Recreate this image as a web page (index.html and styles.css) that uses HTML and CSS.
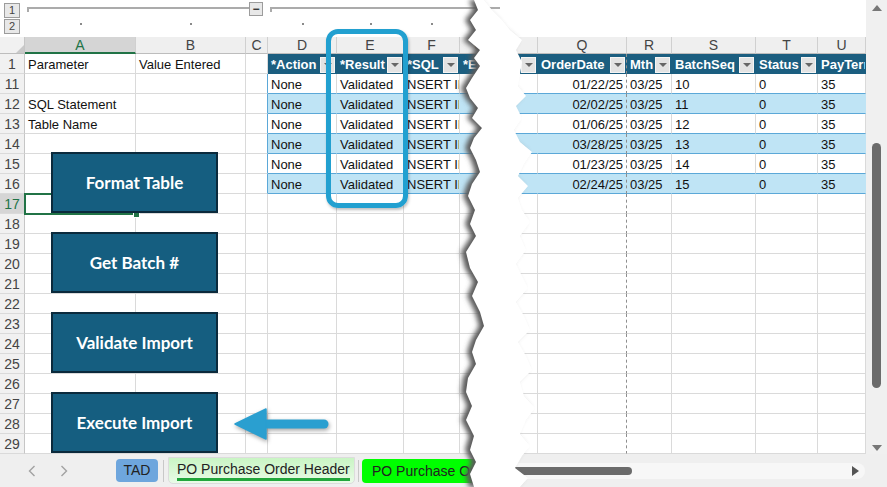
FILE: index.html
```html
<!DOCTYPE html>
<html>
<head>
  <title>PO Import</title>
  <link rel="stylesheet" href="styles.css">
</head>
<body>
<div class="app">
  <div class="top">
    <div class="sheet">
      <div class="band">
        <div class="levels"><span>1</span><span>2</span></div>
        <div class="bracket b1"><i class="ln"></i><span class="minus">&minus;</span></div>
        <div class="bracket b2"><i class="ln"></i></div>
        <i class="dot ca"></i><i class="dot cb"></i><i class="dot cd"></i><i class="dot ce"></i><i class="dot cf"></i>
      </div>

      <div class="row colhead">
        <div class="corner"></div><div class="on">A</div><div>B</div><div>C</div><div>D</div><div>E</div><div>F</div><div>G</div><div></div><div>Q</div><div>R</div><div>S</div><div>T</div><div>U</div>
      </div>
      <div class="row hdr">
        <div>1</div><div>Parameter</div><div>Value Entered</div><div></div>
        <div class="th">*Action<b class="dd"></b></div>
        <div class="th">*Result<b class="dd"></b></div>
        <div class="th">*SQL<b class="dd"></b></div>
        <div class="th">*ErrorMsg</div>
        <div class="th"><b class="dd"></b></div>
        <div class="th">OrderDate<b class="dd"></b></div>
        <div class="th">Mth<b class="dd"></b></div>
        <div class="th">BatchSeq<b class="dd"></b></div>
        <div class="th">Status<b class="dd"></b></div>
        <div class="th">PayTerms</div>
      </div>
      <div class="row t">
        <div>11</div><div></div><div></div><div></div><div>None</div><div>Validated</div><div>NSERT INTO</div><div></div><div></div><div class="r">01/22/25</div><div>03/25</div><div>10</div><div>0</div><div>35</div>
      </div>
      <div class="row t alt">
        <div>12</div><div>SQL Statement</div><div></div><div></div><div>None</div><div>Validated</div><div>NSERT INTO</div><div></div><div></div><div class="r">02/02/25</div><div>03/25</div><div>11</div><div>0</div><div>35</div>
      </div>
      <div class="row t">
        <div>13</div><div>Table Name</div><div></div><div></div><div>None</div><div>Validated</div><div>NSERT INTO</div><div></div><div></div><div class="r">01/06/25</div><div>03/25</div><div>12</div><div>0</div><div>35</div>
      </div>
      <div class="row t alt">
        <div>14</div><div></div><div></div><div></div><div>None</div><div>Validated</div><div>NSERT INTO</div><div></div><div></div><div class="r">03/28/25</div><div>03/25</div><div>13</div><div>0</div><div>35</div>
      </div>
      <div class="row t">
        <div>15</div><div></div><div></div><div></div><div>None</div><div>Validated</div><div>NSERT INTO</div><div></div><div></div><div class="r">01/23/25</div><div>03/25</div><div>14</div><div>0</div><div>35</div>
      </div>
      <div class="row t alt">
        <div>16</div><div></div><div></div><div></div><div>None</div><div>Validated</div><div>NSERT INTO</div><div></div><div></div><div class="r">02/24/25</div><div>03/25</div><div>15</div><div>0</div><div>35</div>
      </div>
      <div class="row cur"><div>17</div><div></div><div></div><div></div><div></div><div></div><div></div><div></div><div></div><div></div><div></div><div></div><div></div><div></div></div>
      <div class="row"><div>18</div><div></div><div></div><div></div><div></div><div></div><div></div><div></div><div></div><div></div><div></div><div></div><div></div><div></div></div>
      <div class="row"><div>19</div><div></div><div></div><div></div><div></div><div></div><div></div><div></div><div></div><div></div><div></div><div></div><div></div><div></div></div>
      <div class="row"><div>20</div><div></div><div></div><div></div><div></div><div></div><div></div><div></div><div></div><div></div><div></div><div></div><div></div><div></div></div>
      <div class="row"><div>21</div><div></div><div></div><div></div><div></div><div></div><div></div><div></div><div></div><div></div><div></div><div></div><div></div><div></div></div>
      <div class="row"><div>22</div><div></div><div></div><div></div><div></div><div></div><div></div><div></div><div></div><div></div><div></div><div></div><div></div><div></div></div>
      <div class="row"><div>23</div><div></div><div></div><div></div><div></div><div></div><div></div><div></div><div></div><div></div><div></div><div></div><div></div><div></div></div>
      <div class="row"><div>24</div><div></div><div></div><div></div><div></div><div></div><div></div><div></div><div></div><div></div><div></div><div></div><div></div><div></div></div>
      <div class="row"><div>25</div><div></div><div></div><div></div><div></div><div></div><div></div><div></div><div></div><div></div><div></div><div></div><div></div><div></div></div>
      <div class="row"><div>26</div><div></div><div></div><div></div><div></div><div></div><div></div><div></div><div></div><div></div><div></div><div></div><div></div><div></div></div>
      <div class="row"><div>27</div><div></div><div></div><div></div><div></div><div></div><div></div><div></div><div></div><div></div><div></div><div></div><div></div><div></div></div>
      <div class="row"><div>28</div><div></div><div></div><div></div><div></div><div></div><div></div><div></div><div></div><div></div><div></div><div></div><div></div><div></div></div>
      <div class="row"><div>29</div><div></div><div></div><div></div><div></div><div></div><div></div><div></div><div></div><div></div><div></div><div></div><div></div><div></div></div>

      <!-- floating shapes over the sheet -->
      <div class="hl"></div>
      <div class="sel"></div>
      <div class="shapes">
        <div class="btn">Format Table</div>
        <div class="btn">Get Batch #</div>
        <div class="btn">Validate Import</div>
        <div class="btn">Execute Import</div>
      </div>
      <svg class="arrow" width="110" height="46" viewBox="0 0 110 46">
        <line x1="34" y1="20" x2="94" y2="20" stroke="#2a9fd0" stroke-width="9" stroke-linecap="round"/>
        <polygon points="5,20 36,5 36,35" fill="#2a9fd0" stroke="#2a9fd0" stroke-width="1.5" stroke-linejoin="round"/>
      </svg>
    </div>

    <div class="vscroll">
      <i class="up"></i>
      <i class="vthumb"></i>
      <i class="down"></i>
    </div>
  </div>

  <div class="tabbar">
    <div class="nav">
      <svg width="8" height="12" viewBox="0 0 8 12"><polyline points="6.5,1 1.5,6 6.5,11" fill="none" stroke="#a2a2a2" stroke-width="1.4"/></svg>
      <svg width="8" height="12" viewBox="0 0 8 12"><polyline points="1.5,1 6.5,6 1.5,11" fill="none" stroke="#a2a2a2" stroke-width="1.4"/></svg>
    </div>
    <div class="tab tad">TAD</div>
    <i class="sep"></i>
    <div class="tab active"><span>PO Purchase Order Header</span></div>
    <i class="sep"></i>
    <div class="tab lime">PO Purchase Order Detail</div>
    <div class="hs">
      <i class="hthumb"></i>
      <i class="right"></i>
    </div>
  </div>

  <!-- torn paper gap between column G and P -->
  <svg class="tear" width="120" height="487" viewBox="0 0 120 487">
    <defs>
      <filter id="blur" x="-50%" y="-5%" width="200%" height="110%">
        <feGaussianBlur stdDeviation="2.6"/>
      </filter>
    </defs>
    <path d="M34,0 L38,10 30,20 36,30 28,40 40,50 34,58 40,66 32,78 26,88 30,98 38,108 32,118 42,128 34,138 30,148 36,160 40,172 32,184 28,196 35,210 30,224 36,236 26,252 30,268 38,282 32,296 40,312 44,326 36,340 32,352 36,364 28,378 26,392 32,406 26,420 34,436 30,450 36,462 30,474 34,487 L80,487 88,478 75,468 82,456 90,446 80,434 86,420 95,408 84,396 80,382 92,370 86,356 78,342 90,330 84,316 76,302 88,288 82,276 76,264 86,250 80,236 90,222 82,210 78,198 88,186 78,176 84,164 92,152 80,142 74,130 82,118 76,106 86,96 78,86 80,74 82,62 76,50 82,40 70,30 62,20 52,10 44,0 Z" fill="#5a5a5a" filter="url(#blur)" transform="translate(-5,0)"/>
    <path d="M34,0 L38,10 30,20 36,30 28,40 40,50 34,58 40,66 32,78 26,88 30,98 38,108 32,118 42,128 34,138 30,148 36,160 40,172 32,184 28,196 35,210 30,224 36,236 26,252 30,268 38,282 32,296 40,312 44,326 36,340 32,352 36,364 28,378 26,392 32,406 26,420 34,436 30,450 36,462 30,474 34,487 L80,487 88,478 75,468 82,456 90,446 80,434 86,420 95,408 84,396 80,382 92,370 86,356 78,342 90,330 84,316 76,302 88,288 82,276 76,264 86,250 80,236 90,222 82,210 78,198 88,186 78,176 84,164 92,152 80,142 74,130 82,118 76,106 86,96 78,86 80,74 82,62 76,50 82,40 70,30 62,20 52,10 44,0 Z" fill="#fff"/>
  </svg>
</div>
</body>
</html>
```

FILE: styles.css
```css
body {
    margin: 0;
    background: #fff;
    font-family: "Liberation Sans", Arial, sans-serif;
}

.app {
    width: 887px;
    height: 487px;
    position: relative;
    overflow: hidden;
}

.top {
    display: flex;
    height: 454px;
}

.sheet {
    width: 866px;
    position: relative;
    overflow: hidden;
}

/* same columns for the outline band and every row */
.band,
.row {
    display: grid;
    grid-template-columns: 25px 111px 110px 22px 69px 67px 56px 40px 38px 89px 45px 84px 62px 48px;
}

/* outline band */
.band {
    height: 37px;
    grid-template-rows: 18px 19px;
}

.levels {
    grid-column: 1;
    grid-row: 1 / span 2;
    display: flex;
    flex-direction: column;
    gap: 1px;
    padding: 3px 0 0 4px;
}

.levels span {
    width: 14px;
    height: 13px;
    border: 1px solid #9c9c9c;
    background: #e8e8e8;
    font-size: 11px;
    line-height: 13px;
    text-align: center;
    color: #444;
}

.bracket {
    grid-row: 1;
    display: flex;
    align-items: flex-start;
}

.b1 {
    grid-column: 2 / 5;
    padding-left: 2px;
    padding-right: 5px;
}

.b2 {
    grid-column: 5 / 9;
    padding-left: 2px;
}

.ln {
    flex: 1;
    height: 3px;
    margin-top: 7px;
    border-top: 2px solid #ababab;
    border-left: 2px solid #ababab;
}

.minus {
    width: 12px;
    height: 12px;
    margin-top: 2px;
    border: 1px solid #9c9c9c;
    background: #e8e8e8;
    font-size: 12px;
    line-height: 12px;
    text-align: center;
    font-weight: bold;
    color: #333;
}

.dot {
    grid-row: 2;
    justify-self: center;
    width: 2px;
    height: 2px;
    margin-top: 5px;
    background: #8a8a8a;
}

.ca { grid-column: 2; }
.cb { grid-column: 3; }
.cd { grid-column: 5; }
.ce { grid-column: 6; }
.cf { grid-column: 7; }

/* grid cells */
.row {
    height: 20px;
    font-size: 13px;
    color: #111;
}

.row > div {
    box-sizing: border-box;
    border-right: 1px solid #dadada;
    border-bottom: 1px solid #dadada;
    padding: 2px 3px 0;
    line-height: 17px;
    white-space: nowrap;
    overflow: hidden;
}

.row > div:first-child {
    background: #f1f1f1;
    border-right-color: #c6c6c6;
    color: #444;
    font-size: 14px;
    text-align: center;
    padding: 2px 0 0;
}

.row > div:nth-child(10) {
    border-right: 1px dashed #8e8e8e;
}

.colhead {
    height: 17px;
    background: #efefef;
}

.colhead > div {
    text-align: center;
    color: #444;
    font-size: 14px;
    line-height: 16px;
    padding: 0;
    border-right-color: #d0d0d0;
    border-bottom-color: #bdbdbd;
}

.colhead > div:first-child {
    padding: 0;
}

.colhead > div:nth-child(10) {
    border-right-style: solid;
    border-right-color: #d0d0d0;
}

.colhead > .corner {
    display: flex;
    justify-content: flex-end;
    align-items: flex-end;
    padding: 0 2px 2px 0;
}

.corner::after {
    content: "";
    border-left: 8px solid transparent;
    border-bottom: 8px solid #c9c9c9;
}

.colhead > .on {
    background: #d5d5d5;
    color: #217346;
    border-bottom: 2px solid #217346;
}

/* table header */
.hdr > .th {
    display: flex;
    align-items: center;
    padding: 2px 1px 0 3px;
    background: #1b5e80;
    color: #fff;
    font-weight: bold;
    border-right-color: #1b5e80;
    border-bottom-color: #1b5e80;
}

.dd {
    flex: none;
    margin-left: auto;
    width: 15px;
    height: 16px;
    box-sizing: border-box;
    background: #e3e3e3;
    border: 1px solid #f4f4f4;
    display: flex;
    align-items: center;
    justify-content: center;
}

.dd::after {
    content: "";
    border-left: 4px solid transparent;
    border-right: 4px solid transparent;
    border-top: 4px solid #666;
}

/* table body */
.t > div:nth-child(4) {
    border-right-color: #5ba8d8;
}

.t > div:nth-child(n+5) {
    border-bottom-color: #5ba8d8;
}

.alt > div:nth-child(n+5) {
    background: #bfe4f5;
    border-right-color: #bfe4f5;
}

.alt > div:nth-child(10) {
    border-right-color: #8e8e8e;
}

.row > .r {
    text-align: right;
}

.cur > div:first-child {
    background: #d5d5d5;
    color: #217346;
}

/* overlays */
.hl {
    position: absolute;
    left: 326px;
    top: 29px;
    width: 82px;
    height: 179px;
    box-sizing: border-box;
    border: 5px solid #22a0d0;
    border-radius: 12px;
    box-shadow: 1px 2px 3px rgba(0, 0, 0, 0.25);
}

.sel {
    position: absolute;
    left: 24px;
    top: 193px;
    width: 113px;
    height: 22px;
    box-sizing: border-box;
    border: 2px solid #217346;
}

.sel::after {
    content: "";
    position: absolute;
    right: -5px;
    bottom: -5px;
    width: 5px;
    height: 5px;
    background: #217346;
    border: 1px solid #fff;
}

.shapes {
    position: absolute;
    left: 51px;
    top: 152px;
    display: flex;
    flex-direction: column;
    gap: 19px;
}

.btn {
    width: 167px;
    height: 61px;
    box-sizing: border-box;
    border: 2px solid #0b2a3c;
    background: #155e80;
    color: #fff;
    font-family: Lato, "Open Sans", sans-serif;
    font-weight: bold;
    font-size: 17px;
    display: flex;
    align-items: center;
    justify-content: center;
}

.arrow {
    position: absolute;
    left: 230px;
    top: 404px;
    filter: drop-shadow(1px 2px 2px rgba(0, 0, 0, 0.35));
}

/* vertical scrollbar */
.vscroll {
    width: 21px;
    background: #f0f0f0;
    display: flex;
    flex-direction: column;
    align-items: center;
    padding-top: 5px;
    box-sizing: border-box;
}

.up {
    border-left: 5px solid transparent;
    border-right: 5px solid transparent;
    border-bottom: 6px solid #777;
}

.vthumb {
    width: 9px;
    height: 245px;
    margin-top: 132px;
    border-radius: 5px;
    background: #6b6b6b;
}

.down {
    margin-top: auto;
    margin-bottom: 3px;
    border-left: 5px solid transparent;
    border-right: 5px solid transparent;
    border-top: 6px solid #777;
}

/* sheet tabs */
.tabbar {
    height: 33px;
    background: #efefef;
    display: flex;
    align-items: center;
    font-size: 14px;
    color: #222;
}

.nav {
    display: flex;
    gap: 24px;
    margin: 0 48px 0 28px;
}

.tab {
    box-sizing: border-box;
    white-space: nowrap;
    overflow: hidden;
}

.tad {
    width: 42px;
    height: 23px;
    line-height: 23px;
    text-align: center;
    background: #6ea6dd;
    border-radius: 4px;
}

.sep {
    width: 1px;
    height: 22px;
    background: #c8c8c8;
    margin: 0 4px 0 5px;
}

.active {
    width: 187px;
    height: 27px;
    margin-top: -1px;
    padding: 3px 0 0 8px;
    background: linear-gradient(#c9f5c4, #e9fbe7);
    border: 1px solid #dcdcdc;
    border-radius: 0 0 5px 5px;
}

.active span {
    display: inline-block;
    padding-bottom: 1px;
    border-bottom: 3px solid #22a63c;
}

.active + .sep {
    margin: 0 3px;
}

.lime {
    width: 140px;
    height: 24px;
    line-height: 24px;
    padding-left: 10px;
    background: #00ff00;
    border-radius: 4px;
}

.hs {
    flex: 1;
    height: 16px;
    margin-right: 22px;
    padding: 0 6px 0 3px;
    background: #f7f7f7;
    border-radius: 8px;
    display: flex;
    align-items: center;
}

.hthumb {
    width: 127px;
    height: 8px;
    border-radius: 4px;
    background: #6b6b6b;
}

.right {
    margin-left: auto;
    border-top: 5px solid transparent;
    border-bottom: 5px solid transparent;
    border-left: 7px solid #555;
}

.tear {
    position: absolute;
    left: 440px;
    top: 0;
}
```
